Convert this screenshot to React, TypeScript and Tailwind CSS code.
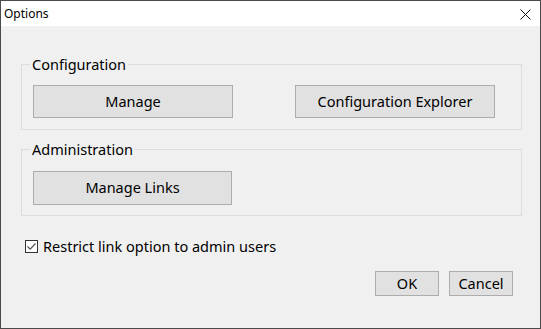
export default function App() {
  const font = { fontFamily: '"Noto Sans", "Open Sans", sans-serif' }

  return (
    <div
      className="w-[541px] h-[329px] border border-[#4a4a4a] bg-[#f0f0f0] flex flex-col text-black"
      style={font}
    >
      {/* title bar */}
      <div className="h-[25px] bg-white flex items-center justify-between pl-[3px] pr-[9px]">
        <span className="text-[12px] leading-none">Options</span>
        <svg width="11" height="11" viewBox="0 0 11 11" className="mt-[1px]">
          <path d="M0.5 0.5 L10.5 10.5 M10.5 0.5 L0.5 10.5" stroke="#111" strokeWidth="1" />
        </svg>
      </div>

      <div className="flex flex-col px-[20px] text-[14.5px]">
        <fieldset className="mt-[28px] w-[501px] border border-[#dcdcdc] p-0 m-0">
          <legend className="ml-[8px] px-[2px] leading-[20px]">Configuration</legend>
          <div className="flex justify-between pt-[11px] pb-[11px] pl-[11px] pr-[26px]">
            <button className="w-[200px] h-[33px] bg-[#e1e1e1] border border-[#adadad]">
              Manage
            </button>
            <button className="w-[200px] h-[33px] bg-[#e1e1e1] border border-[#adadad]">
              Configuration Explorer
            </button>
          </div>
        </fieldset>

        <fieldset className="mt-[9px] w-[501px] border border-[#dcdcdc] p-0 m-0">
          <legend className="ml-[8px] px-[2px] leading-[20px]">Administration</legend>
          <div className="flex pt-[12px] pb-[10px] pl-[11px]">
            <button className="w-[199px] h-[34px] bg-[#e1e1e1] border border-[#adadad]">
              Manage Links
            </button>
          </div>
        </fieldset>

        <label className="mt-[20px] ml-[4px] flex items-center gap-[5px] leading-[20px]">
          <span className="w-[13px] h-[13px] border border-[#333] bg-white flex items-center justify-center">
            <svg width="11" height="11" viewBox="0 0 11 11">
              <path d="M1.5 5.5 L4.2 8.2 L9.5 2.5" fill="none" stroke="#555" strokeWidth="1.2" />
            </svg>
          </span>
          Restrict link option to admin users
        </label>

        <div className="mt-[15px] flex justify-end gap-[10px] pr-[7px]">
          <button className="w-[64px] h-[25px] bg-[#e1e1e1] border border-[#adadad] leading-none">
            OK
          </button>
          <button className="w-[64px] h-[25px] bg-[#e1e1e1] border border-[#adadad] leading-none">
            Cancel
          </button>
        </div>
      </div>
    </div>
  )
}
